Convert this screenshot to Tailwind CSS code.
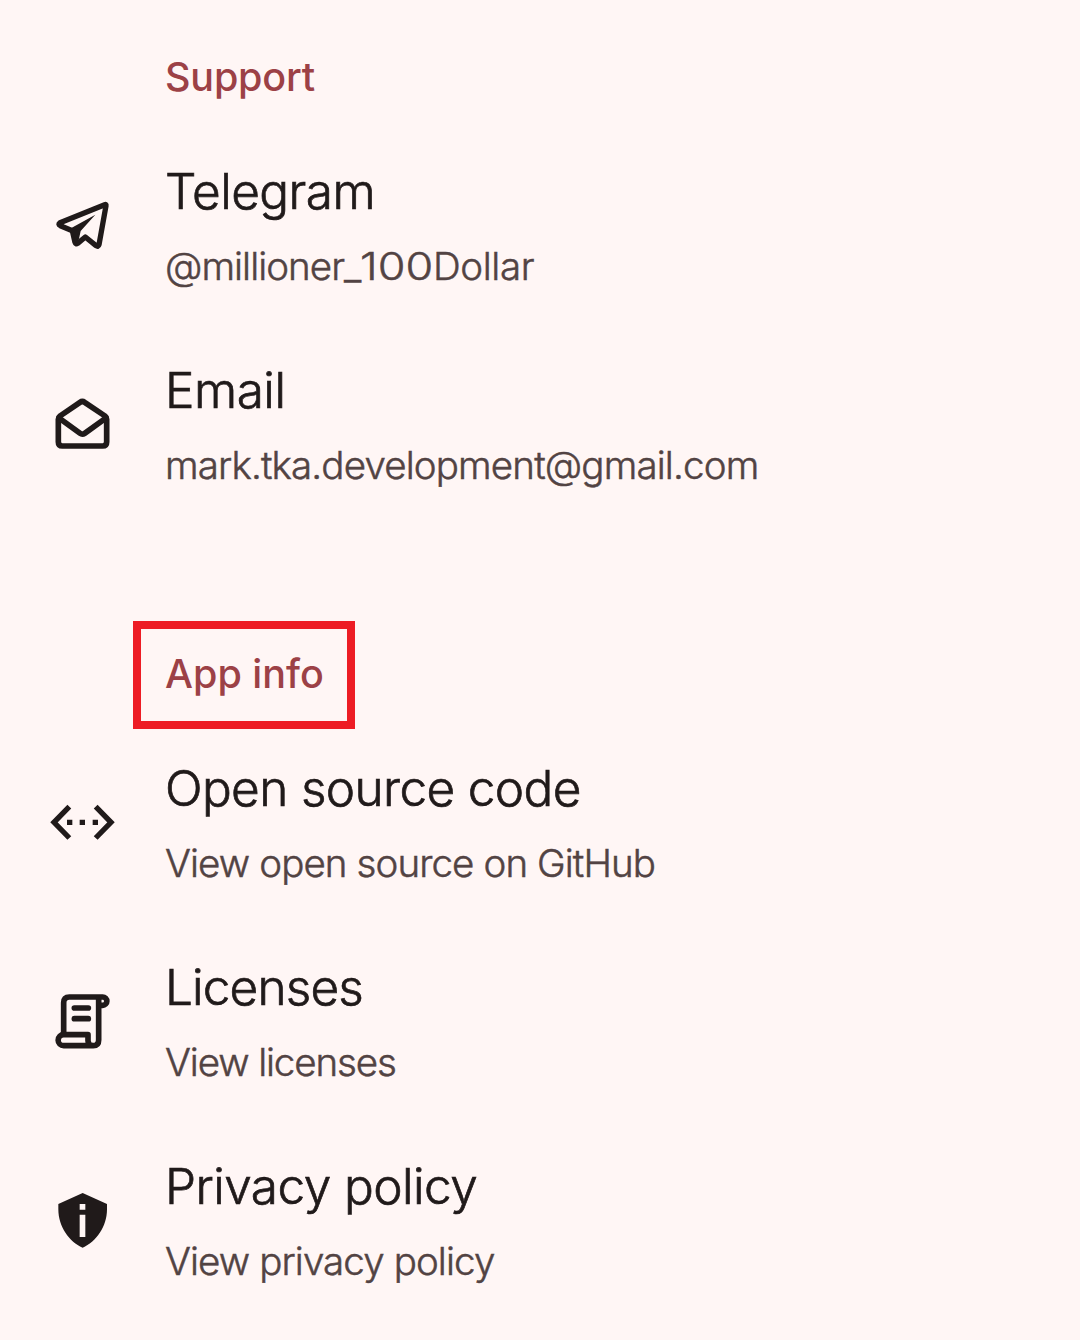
<!DOCTYPE html>
<html lang="en">
<head>
<meta charset="utf-8">
<title>Support and app info</title>
<script src="https://cdn.jsdelivr.net/npm/@tailwindcss/browser@4"></script>
</head>
<body class="h-[1340px] overflow-hidden bg-[#fff6f5] font-['Inter',sans-serif] text-[#201a1a] whitespace-nowrap">
<main class="flex flex-col pt-[47px]">
  <section>
    <h2 class="mb-[19px] ml-[165px] text-[39.5px] leading-[60px] font-medium tracking-[-0.2px] text-[#9c4146]">Support</h2>
    <div class="flex h-[199px] items-center gap-[41px] pl-10">
      <svg class="h-[79px] w-[84px] shrink-0" viewBox="0 3 252 237" fill="none" stroke="currentColor" stroke-width="16" stroke-linejoin="round" stroke-linecap="round">
        <path d="M60 113L194 59Q199 57 198 62L177 179Q175 187 168 182L136 156L113 175Q107 179 105 172L97 137L61 122Q53 118 60 113Z"/>
        <path d="M90 131L166 89L122 138L117 161L108 178L100 150Z" fill="currentColor" stroke="none"/>
      </svg>
      <div class="flex flex-col gap-4">
        <h3 class="text-[49.5px] leading-[64px] font-light tracking-[-0.55px] [-webkit-text-stroke:0.7px_currentColor]">Telegram</h3>
        <p class="text-[38.5px] leading-[54px] font-light tracking-[-0.95px] text-[#524343] [-webkit-text-stroke:0.5px_currentColor]">@millioner_<span class="mr-[10px] inline-block origin-left scale-x-[1.166] tracking-normal">100</span><span class="tracking-[-0.4px]">Dollar</span></p>
      </div>
    </div>
    <div class="flex h-[199px] items-center gap-[41px] pl-10">
      <svg class="h-[79px] w-[84px] shrink-0" viewBox="0 -1 252 237" fill="none" stroke="currentColor" stroke-width="17" stroke-linejoin="round" stroke-linecap="round">
        <path d="M60 92L120 51Q127 46 134 51L195 92Q200 96 200 102V170Q200 182 188 182H67Q55 182 55 170V102Q55 96 60 92Z"/>
        <path d="M57 98L120 144Q127 149 134 144L198 98"/>
      </svg>
      <div class="flex flex-col gap-4">
        <h3 class="text-[49.5px] leading-[64px] font-light tracking-[-0.5px] [-webkit-text-stroke:0.7px_currentColor]">Email</h3>
        <p class="text-[38.5px] leading-[54px] font-light tracking-[-0.85px] text-[#524343] [-webkit-text-stroke:0.5px_currentColor]">mark.tka.development@gmail.com</p>
      </div>
    </div>
  </section>

  <section class="mt-[120px]">
    <div class="relative mb-[19px] ml-[165px] w-fit">
      <h2 class="text-[39.5px] leading-[60px] font-medium text-[#9c4146]">App info</h2>
      <div class="absolute -top-[23px] -left-8 h-[108px] w-[222px] border-8 border-[#ed1c24]"></div>
    </div>
    <div class="flex h-[199px] items-center gap-[41px] pl-10">
      <svg class="h-[79px] w-[84px] shrink-0" viewBox="0 -6 252 237" fill="none" stroke="currentColor" stroke-width="16">
        <path d="M88 65L42 112L88 159M167 65L213 112L167 159"/>
        <path d="M81 104h16v16h-16zM119 104h16v16h-16zM158 104h16v16h-16z" fill="currentColor" stroke="none"/>
      </svg>
      <div class="flex flex-col gap-4">
        <h3 class="text-[49.5px] leading-[64px] font-light tracking-[-0.63px] [-webkit-text-stroke:0.7px_currentColor]">Open source code</h3>
        <p class="text-[38.5px] leading-[54px] font-light tracking-[-0.9px] text-[#524343] [-webkit-text-stroke:0.5px_currentColor]">View open source on GitHub</p>
      </div>
    </div>
    <div class="flex h-[199px] items-center gap-[41px] pl-10">
      <svg class="h-[79px] w-[84px] shrink-0" viewBox="0 6 252 237" fill="none" stroke="currentColor" stroke-width="17" stroke-linejoin="round" stroke-linecap="round">
        <path d="M71 162V68Q71 51 88 51H188A12.500 12.500 0 0 1 188 76H178"/>
        <path d="M176 54V180Q176 197 160 197H71A16 16 0 0 1 71 164H144V182Q144 197 160 197"/>
        <path d="M103 84H145M103 116H145"/>
      </svg>
      <div class="flex flex-col gap-4">
        <h3 class="text-[49.5px] leading-[64px] font-light tracking-[-0.85px] [-webkit-text-stroke:0.7px_currentColor]">Licenses</h3>
        <p class="text-[38.5px] leading-[54px] font-light tracking-[-1.12px] text-[#524343] [-webkit-text-stroke:0.5px_currentColor]">View licenses</p>
      </div>
    </div>
    <div class="flex h-[199px] items-center gap-[41px] pl-10">
      <svg class="h-[79px] w-[84px] shrink-0" viewBox="0 3 252 237" fill="currentColor" fill-rule="evenodd">
        <path d="M128 39L201 72V88C201 140 168 186 128 203C88 186 55 140 55 88V72ZM119 72V89H136V72ZM119 104V171H136V104Z"/>
      </svg>
      <div class="flex flex-col gap-4">
        <h3 class="text-[49.5px] leading-[64px] font-light tracking-[-0.55px] [-webkit-text-stroke:0.7px_currentColor]">Privacy policy</h3>
        <p class="text-[38.5px] leading-[54px] font-light tracking-[-0.9px] text-[#524343] [-webkit-text-stroke:0.5px_currentColor]">View privacy policy</p>
      </div>
    </div>
  </section>
</main>
</body>
</html>
